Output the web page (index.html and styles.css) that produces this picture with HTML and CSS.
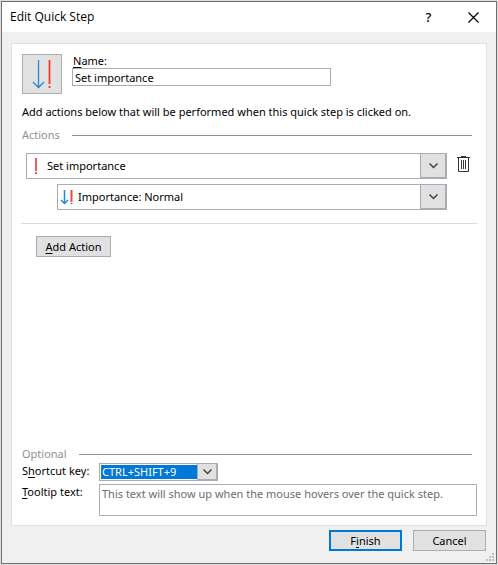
FILE: index.html
```html
<!DOCTYPE html>
<html lang="en">
<head>
    <meta charset="UTF-8">
    <meta name="viewport" content="width=device-width, initial-scale=1.0">
    <title>Edit Quick Step</title>
    <link rel="stylesheet" href="styles.css">
</head>
<body>
    <div class="dialog">
        <header class="titlebar">
            <h1>Edit Quick Step</h1>
            <button type="button" class="title-button help" aria-label="Help">?</button>
            <button type="button" class="title-button" aria-label="Close">
                <svg width="11" height="11" viewBox="0 0 11 11"><path d="M.5 .5l10 10M10.5 .5l-10 10" stroke="#000" stroke-width="1.200" fill="none"/></svg>
            </button>
        </header>

        <form class="content">
            <div class="panel">
                <div class="name-row">
                    <button type="button" class="icon-button" aria-label="Change icon">
                        <svg width="38" height="38" viewBox="0 0 38 38">
                            <path d="M15.500 5v27M10 27l5.500 5.500L21 27" stroke="#2488d8" stroke-width="1.300" fill="none"/>
                            <path d="M25 5h3v24h-3zM25 31h3v2h-3z" fill="#f09a9a"/>
                            <path d="M26 5h1v24h-1zM26 31h1v2h-1z" fill="#e83c3c"/>
                        </svg>
                    </button>
                    <div class="name-field">
                        <label for="name"><u>N</u>ame:</label>
                        <input type="text" id="name" value="Set importance">
                    </div>
                </div>

                <p class="intro">Add actions below that will be performed when this quick step is clicked on.</p>

                <h2 class="section">Actions</h2>

                <div class="actions">
                    <div class="action-row">
                        <div class="combo">
                            <select aria-label="Action">
                                <option>Set importance</option>
                            </select>
                            <svg class="combo-icon" width="20" height="24" viewBox="0 0 20 24">
                                <path d="M8 4h2v13h-2zM8 18h2v2h-2z" fill="#ec5c5c"/>
                            </svg>
                            <span class="arrow"><svg width="9" height="6" viewBox="0 0 9 6"><path d="M.5 .5l4 4 4-4" stroke="#444" stroke-width="1.500" fill="none"/></svg></span>
                        </div>
                        <button type="button" class="delete-button" aria-label="Delete action">
                            <svg width="13" height="16" viewBox="0 0 13 16">
                                <path d="M0 1.500h13M4 .5h5M1.500 2v13.500h10V2M4.500 4v9M6.500 4v9M8.500 4v9" stroke="#333" fill="none"/>
                            </svg>
                        </button>
                    </div>
                    <div class="action-row sub">
                        <div class="combo">
                            <select aria-label="Importance">
                                <option>Importance: Normal</option>
                            </select>
                            <svg class="combo-icon" width="20" height="24" viewBox="0 0 20 24">
                                <path d="M6.500 5v13M3 15l3.500 3.500L10 15" stroke="#2488d8" stroke-width="1.500" fill="none"/>
                                <path d="M12 5h3v12h-3zM12 18h3v1h-3z" fill="#f4a3a3"/>
                                <path d="M13 5h1v12h-1zM13 18h1v1h-1z" fill="#e84c4c"/>
                            </svg>
                            <span class="arrow"><svg width="9" height="6" viewBox="0 0 9 6"><path d="M.5 .5l4 4 4-4" stroke="#444" stroke-width="1.500" fill="none"/></svg></span>
                        </div>
                    </div>
                </div>

                <div class="add-area">
                    <button type="button" class="button add-button"><u>A</u>dd Action</button>
                </div>

                <h2 class="section">Optional</h2>

                <div class="optional">
                    <label for="shortcut">S<u>h</u>ortcut key:</label>
                    <div class="combo small">
                        <select id="shortcut">
                            <option>CTRL+SHIFT+9</option>
                        </select>
                        <span class="arrow"><svg width="9" height="6" viewBox="0 0 9 6"><path d="M.5 .5l4 4 4-4" stroke="#444" stroke-width="1.500" fill="none"/></svg></span>
                    </div>
                    <label for="tooltip"><u>T</u>ooltip text:</label>
                    <textarea id="tooltip" placeholder="This text will show up when the mouse hovers over the quick step."></textarea>
                </div>
            </div>

            <div class="buttons">
                <button type="submit" class="button default">F<u>i</u>nish</button>
                <button type="button" class="button">Cancel</button>
            </div>
        </form>

        <svg class="grip" width="8" height="8" viewBox="0 0 8 8">
            <path d="M6 0h2v2h-2zM3 3h2v2h-2zM6 3h2v2h-2zM0 6h2v2h-2zM3 6h2v2h-2zM6 6h2v2h-2z" fill="#bfbfbf"/>
        </svg>
    </div>
</body>
</html>
```
FILE: styles.css
```css
* {
    box-sizing: border-box;
}
body {
    margin: 0;
    padding: 1px;
    min-height: 100vh;
    display: flex;
    background: #dcdcdc;
    font-family: "Noto Sans", "Open Sans", sans-serif;
    font-size: 11px;
    line-height: 16px;
    color: #000;
}
button, input, select, textarea {
    font: inherit;
    color: inherit;
    margin: 0;
    border-radius: 0;
    outline: none;
}
u {
    text-underline-offset: 2px;
}
.dialog {
    position: relative;
    flex: 1;
    display: flex;
    flex-direction: column;
    border: 1px solid #707070;
    background: #f0f0f0;
}
.titlebar {
    display: flex;
    align-items: center;
    height: 30px;
    padding-left: 8px;
    background: #fff;
}
h1 {
    flex: 1;
    margin: 0;
    font-family: "Open Sans", "Noto Sans", sans-serif;
    font-size: 12px;
    font-weight: normal;
}
.title-button {
    display: flex;
    align-items: center;
    justify-content: center;
    width: 45px;
    height: 28px;
    padding: 0;
    border: none;
    background: none;
}
.help {
    font-size: 13px;
    font-weight: 500;
}
.content {
    flex: 1;
    display: flex;
    flex-direction: column;
    padding: 11px 9px 12px;
}
.panel {
    flex: 1;
    display: flex;
    flex-direction: column;
    padding: 10px 9px 9px;
    border: 1px solid #e1e1e4;
    background: #fff;
}
.name-row {
    display: flex;
    gap: 10px;
    padding-left: 1px;
}
.icon-button {
    width: 40px;
    height: 40px;
    padding: 0;
    border: 1px solid #adadad;
    background: #e1e1e1;
}
.icon-button svg {
    display: block;
}
.name-field {
    width: 57%;
}
.name-field label {
    display: block;
    height: 14px;
    line-height: 14px;
    padding-left: 1px;
}
.name-field input {
    display: block;
    width: 100%;
    height: 18px;
    padding: 0 2px;
    border: 1px solid #ababb3;
}
.intro {
    margin: 10px 1px 7px;
}
.section {
    display: flex;
    align-items: center;
    gap: 12px;
    margin: 0 5px 0 1px;
    font-size: 11px;
    font-weight: normal;
    color: #919191;
}
.section::after {
    content: "";
    flex: 1;
    height: 1px;
    background: #919191;
}
.actions {
    display: flex;
    flex-direction: column;
    gap: 5px;
    padding: 10px 6px 13px 5px;
    border-bottom: 1px solid #dadada;
}
.action-row {
    display: flex;
    align-items: flex-start;
    gap: 10px;
}
.action-row.sub {
    padding: 0 24px 0 31px;
}
.combo {
    position: relative;
    flex: 1;
    height: 26px;
    border: 1px solid #ababb3;
    background: #fff;
}
.combo select {
    display: block;
    width: 100%;
    height: 24px;
    padding: 0 30px 0 20px;
    border: none;
    background: transparent;
    appearance: none;
}
.combo-icon {
    position: absolute;
    top: 0;
    left: 0;
    pointer-events: none;
}
.arrow {
    position: absolute;
    top: 0;
    right: 0;
    bottom: 0;
    display: flex;
    align-items: center;
    justify-content: center;
    width: 26px;
    border: 1px solid #ababb3;
    border-top-width: 0;
    background: #e1e1e1;
    pointer-events: none;
}
.delete-button {
    width: 14px;
    padding: 3px 0;
    border: none;
    background: none;
}
.delete-button svg {
    display: block;
}
.add-area {
    flex: 1;
    padding: 12px 15px;
}
.button {
    width: 73px;
    height: 21px;
    padding: 0;
    border: 1px solid #adadad;
    background: #e1e1e1;
    line-height: 19px;
}
.add-button {
    width: 75px;
}
.button.default {
    border: 2px solid #0078d7;
    line-height: 17px;
}
.optional {
    display: grid;
    grid-template-columns: 77px 1fr;
    row-gap: 3px;
    padding: 1px 0 0 1px;
}
.optional label {
    line-height: 15px;
}
.combo.small {
    width: 119px;
    height: 18px;
    padding: 1px 20px 1px 1px;
}
.combo.small select {
    height: 14px;
    padding: 0 1px;
    line-height: 14px;
    background: #0078d7;
    color: #fff;
}
.combo.small .arrow {
    width: 20px;
}
.optional textarea {
    display: block;
    width: 100%;
    height: 32px;
    padding: 1px 2px;
    border: 1px solid #ababb3;
    resize: none;
}
.optional textarea::placeholder {
    color: #6d6d6d;
}
.buttons {
    display: flex;
    justify-content: flex-end;
    gap: 11px;
    padding: 4px 1px 0 0;
}
.grip {
    position: absolute;
    right: 2px;
    bottom: 2px;
}
```
